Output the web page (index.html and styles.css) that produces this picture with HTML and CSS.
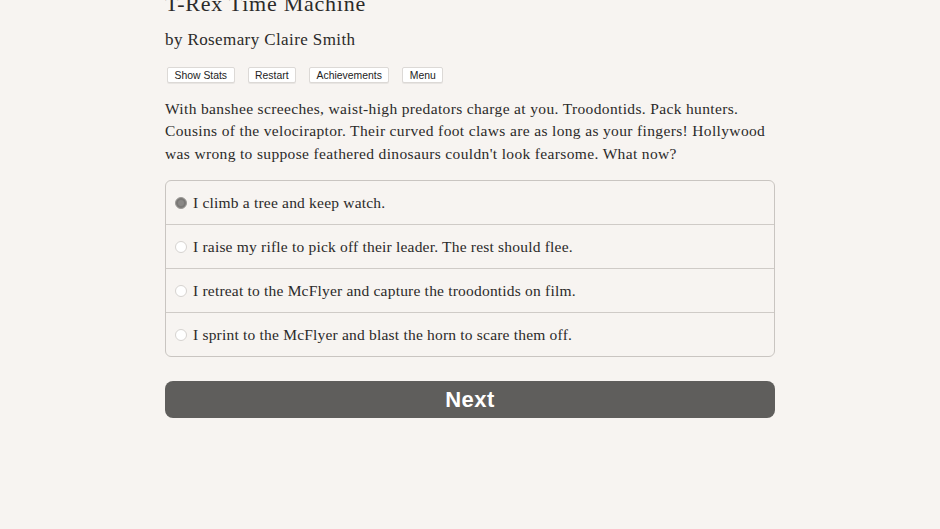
FILE: index.html
```html
<!DOCTYPE html>
<html>
<head>
<meta charset="utf-8">
<link rel="stylesheet" href="styles.css">
</head>
<body>
<main class="page">
  <h1 class="title">T-Rex Time Machine</h1>
  <h2 class="byline">by Rosemary Claire Smith</h2>
  <nav class="toolbar">
    <button class="tool">Show Stats</button>
    <button class="tool">Restart</button>
    <button class="tool">Achievements</button>
    <button class="tool">Menu</button>
  </nav>
  <p class="story">With banshee screeches, waist-high predators charge at you. Troodontids. Pack hunters. Cousins of the velociraptor. Their curved foot claws are as long as your fingers! Hollywood was wrong to suppose feathered dinosaurs couldn't look fearsome. What now?</p>
  <div class="choices">
    <label class="choice"><span class="radio checked"></span><span>I climb a tree and keep watch.</span></label>
    <label class="choice"><span class="radio"></span><span>I raise my rifle to pick off their leader. The rest should flee.</span></label>
    <label class="choice"><span class="radio"></span><span>I retreat to the McFlyer and capture the troodontids on film.</span></label>
    <label class="choice"><span class="radio"></span><span>I sprint to the McFlyer and blast the horn to scare them off.</span></label>
  </div>
  <button class="next">Next</button>
</main>
</body>
</html>
```
FILE: styles.css
```css
html, body {
  margin: 0;
  padding: 0;
  background: #f7f4f1;
  height: 100%;
  overflow: hidden;
}
body {
  font-family: "Liberation Serif", "DejaVu Serif", serif;
  color: #2b2a29;
}
.page {
  width: 610px;
  margin: -9.5px 0 0 165px;
  display: flex;
  flex-direction: column;
}
.title {
  font-size: 22px;
  line-height: 26px;
  font-weight: normal;
  margin: 0;
  letter-spacing: 0.75px;
}
.byline {
  font-size: 17px;
  line-height: 22px;
  font-weight: normal;
  margin: 12.5px 0 0;
  letter-spacing: 0.4px;
}
.toolbar {
  display: flex;
  gap: 13px;
  margin: 16px 0 0 2px;
}
.tool {
  font-family: "Liberation Sans", Arial, sans-serif;
  font-size: 10.4px;
  height: 16px;
  padding: 0 6.5px;
  background: #fff;
  color: #222;
  border: 1px solid #dcd9d6;
  border-radius: 2px;
  box-shadow: 0 1px 0 rgba(0,0,0,0.06);
}
.story {
  font-size: 15.5px;
  line-height: 22.5px;
  margin: 14.5px 0 0;
  letter-spacing: 0.35px;
}
.choices {
  margin-top: 15px;
  border: 1px solid #c9c5c1;
  border-radius: 6px;
  display: flex;
  flex-direction: column;
}
.choice {
  height: 43px;
  display: flex;
  align-items: center;
  gap: 6px;
  padding-left: 9px;
  font-size: 15.5px;
  letter-spacing: 0.2px;
  border-top: 1px solid #cfcbc7;
}
.choice:first-child {
  border-top: none;
}
.radio {
  width: 12px;
  height: 12px;
  border-radius: 50%;
  border: 1px solid #d6d3d0;
  background: #fff;
  flex: none;
  box-sizing: border-box;
}
.radio.checked {
  background: #8a8886;
  border: 1px solid #9c9a97;
  box-shadow: inset 0 0 0 2px #7a7876;
}
.next {
  margin-top: 24px;
  height: 37px;
  border: none;
  border-radius: 8px;
  background: #5f5e5c;
  color: #fff;
  font-family: "Liberation Sans", Arial, sans-serif;
  font-weight: bold;
  font-size: 22px;
  letter-spacing: 0.5px;
}
```
